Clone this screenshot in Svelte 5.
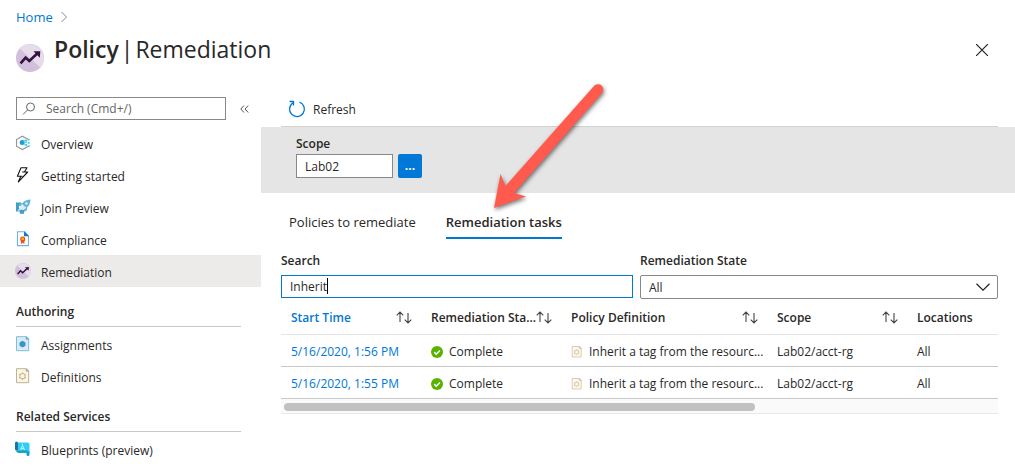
<script>
  const menu = [
    { items: [
      { icon: 'overview', label: 'Overview' },
      { icon: 'bolt', label: 'Getting started' },
      { icon: 'rocket', label: 'Join Preview' },
      { icon: 'compliance', label: 'Compliance' },
      { icon: 'trend', label: 'Remediation', active: true },
    ] },
    { title: 'Authoring', items: [
      { icon: 'assignment', label: 'Assignments' },
      { icon: 'definition', label: 'Definitions' },
    ] },
    { title: 'Related Services', items: [
      { icon: 'blueprint', label: 'Blueprints (preview)' },
    ] },
  ];
  const columns = [
    { label: 'Start Time', sort: true, sorted: true },
    { label: 'Remediation Sta...', sort: true },
    { label: 'Policy Definition', sort: true },
    { label: 'Scope', sort: true },
    { label: 'Locations' },
  ];
  const rows = [
    { time: '5/16/2020, 1:56 PM', state: 'Complete', policy: 'Inherit a tag from the resourc...', scope: 'Lab02/acct-rg', loc: 'All' },
    { time: '5/16/2020, 1:55 PM', state: 'Complete', policy: 'Inherit a tag from the resourc...', scope: 'Lab02/acct-rg', loc: 'All' },
  ];
  let query = $state('Inherit');
  let scope = $state('Lab02');
  let filter = $state('');
</script>

{#snippet icon(name, size = 16)}
  <svg class="icon" width={size} height={size} viewBox="0 0 16 16" fill="none" aria-hidden="true">
    {#if name === 'overview'}
      <path d="M13 4.2 7.3 1.2 1.5 4.5v6.8l5.8 3.3 5.7-3" stroke="#949494" stroke-width="1.1" />
      <circle cx="7.2" cy="7.6" r="2.5" fill="#1a9ed4" />
      <path d="M9 7.6h3M8.5 6l3-1.6M8.5 9.2l3 1.6" stroke="#50d5ef" />
      <path d="M10.3 5h1.8v1.8h-1.8zM12.8 3.8h1.8v1.8h-1.8zM10.3 9h1.8v1.8h-1.8zM12.8 7h1.8v1.8h-1.8zM12.8 10.3h1.8v1.8h-1.8z" fill="#3fc8ea" />
    {:else if name === 'bolt'}
      <path d="M6 .8h6L9.4 5h3.3L3.4 14.8l2.4-5.6H2.4L6 .8ZM9.4 5H7.2M5.8 9.2h1.6" stroke="#111" stroke-width="1.1" stroke-linejoin="round" />
    {:else if name === 'rocket'}
      <path d="M1 3.500h5v3H4v4h5v4.300H4.800v-2.300H1z" fill="#3a9fc9" />
      <path d="M15.500.500C12.200.700 9.500 1.800 7.600 4.100L4.500 4.600 3 7.300l3-.2 3 3-.2 3 2.900-1.500.5-3.200C14.500 6.600 15.500 3.800 15.500.500Z" fill="#62b5d8" />
      <path d="M7 5 4.800 8.200l3 3 3.700-2.400Z" fill="#e3eaed" />
      <circle cx="11.500" cy="4.500" r="1.200" fill="#e8f5fa" />
      <path d="M5 8.500 2 12.600l4.500-1.900" fill="#d3dde1" />
    {:else if name === 'compliance'}
      <path d="M2.5.8h7l4 4v9.8h-11z" fill="#fff" stroke="#72b3e2" stroke-width="1.1" />
      <path d="M9 .3 14 5.300H9z" fill="#0f79cc" />
      <path d="M6 9h3.400v4l-1.700-1.100L6 13z" fill="#ef5b18" />
      <circle cx="7.700" cy="7.900" r="2.500" fill="#e8431c" />
      <circle cx="7.700" cy="7.900" r="1.400" fill="#ffb400" />
    {:else if name === 'trend'}
      <circle cx="8" cy="8" r="8" fill="#d2bfd9" />
      <path d="M2.100 2.600A8 8 0 0 1 13.900 13.400Z" fill="#e7ddea" />
      <path d="m2.600 11.100 2.900-3.300 2.100 1.900 4.400-4.100" stroke="#341143" stroke-width="1.500" />
      <path d="m10 4.200 3.900-.1-.3 3.700z" fill="#341143" />
    {:else if name === 'assignment'}
      <path d="M1.500.7h10l2.200 2v12h-12.200z" fill="#d9edf8" stroke="#82bcd8" />
      <path d="M11 .5v2.800h3" fill="#72acd0" stroke="#72acd0" stroke-width=".6" />
      <path d="m7.500 4.800 3 1.700v3.300l-3 1.700-3-1.700V6.500z" fill="#3795c5" />
    {:else if name === 'definition'}
      <path d="M1.500.7h10l2.200 2v12h-12.200z" fill="#fff5d9" stroke="#b8b3a4" />
      <path d="M11 .5v2.800h3" fill="#b0aca0" stroke="#b0aca0" stroke-width=".6" />
      <circle cx="7.500" cy="8.200" r="2.700" stroke="#b3aea2" />
      <path d="M7.500 4.300v1m0 5.800v1M4.100 6.200l.9.500m5 2.900.9.500m-6.800 0 .9-.5m5-2.900.9-.5" stroke="#b3aea2" />
    {:else if name === 'blueprint'}
      <path d="M0 2A1.500 1.500 0 0 1 3 2v7.500H1.500A1.500 1.500 0 0 1 0 8z" fill="#17779d" />
      <path d="M3 1.500h9.500a2 2 0 0 1 2 2V12H3z" fill="#32cdf3" />
      <path d="M1 9.500h11.500v2.200H3a2.200 2.200 0 0 1-2-2.200ZM11.500 10.500h3v3a1.500 1.500 0 0 1-3 0z" fill="#159ec5" />
      <path d="m5.500 9 2-4.500 2 4.500M7.500 2.800v1.700M6 7.600h3" stroke="#c6f4ff" />
    {:else if name === 'check'}
      <circle cx="8" cy="8" r="8" fill="#57b300" />
      <path d="m4.300 8.200 2.700 2.700 4.900-5" stroke="#fff" stroke-width="2" />
    {/if}
  </svg>
{/snippet}

<div class="page">
  <header>
    <nav class="crumbs" aria-label="Breadcrumb">
      <a href="#home">Home</a>
      <svg width="6" height="12" viewBox="0 0 6 12" fill="none" aria-hidden="true"><path d="m.5 1 5 5-5 5" stroke="#858585" /></svg>
    </nav>
    <div class="heading">
      <span class="logo">{@render icon('trend', 28)}</span>
      <h1><strong>Policy</strong><span>|</span><span>Remediation</span></h1>
      <button class="close" aria-label="Close">
        <svg width="12" height="12" viewBox="0 0 12 12" aria-hidden="true"><path d="m0 0 12 12M12 0 0 12" stroke="#222" stroke-width="1.200" /></svg>
      </button>
    </div>
  </header>

  <div class="body">
    <aside>
      <div class="find">
        <label class="findbox">
          <svg width="14" height="14" viewBox="0 0 14 14" fill="none" stroke="#666" aria-hidden="true"><circle cx="8.500" cy="5" r="4" /><path d="M5.500 8 1 12.500" /></svg>
          <input type="text" placeholder="Search (Cmd+/)" aria-label="Search menu" />
        </label>
        <button class="collapse" aria-label="Collapse menu">
          <svg width="9" height="8" viewBox="0 0 9 8" fill="none" stroke="#555" aria-hidden="true"><path d="M4 .5.800 4 4 7.500M8.200.5 5 4l3.200 3.500" /></svg>
        </button>
      </div>
      <nav aria-label="Policy">
        {#each menu as group}
          {#if group.title}<h2>{group.title}</h2>{/if}
          <ul>
            {#each group.items as item}
              <li><a href="#item" class:active={item.active}>{@render icon(item.icon)}<span>{item.label}</span></a></li>
            {/each}
          </ul>
        {/each}
      </nav>
    </aside>

    <main>
      <div class="toolbar">
        <button>
          <svg width="18" height="18" viewBox="0 0 18 18" fill="none" stroke="#0078d4" stroke-width="1.300" aria-hidden="true"><path d="M11.500 2.200A7.400 7.400 0 1 1 5.200 2.800M1.500 1.500h4v4" /></svg>
          <span>Refresh</span>
        </button>
      </div>
      <section class="scope">
        <label for="scope">Scope</label>
        <div class="scope-row">
          <input id="scope" type="text" bind:value={scope} />
          <button aria-label="Select scope">...</button>
        </div>
      </section>

      <div class="content">
        <div class="tabs" role="tablist">
          <button role="tab" aria-selected="false">Policies to remediate</button>
          <button role="tab" aria-selected="true" class="selected">Remediation tasks</button>
        </div>
        <div class="filters">
          <div class="field">
            <label for="query">Search</label>
            <div class="query">
              <input id="query" type="text" bind:value={query} />
              <span class="caret"></span>
            </div>
          </div>
          <div class="field">
            <label for="state">Remediation State</label>
            <div class="select">
              <select id="state" bind:value={filter}><option value="">All</option></select>
              <svg width="14" height="8" viewBox="0 0 14 8" fill="none" stroke="#222" stroke-width="1.200" aria-hidden="true"><path d="m.5.800 6.500 6.400L13.500.800" /></svg>
            </div>
          </div>
        </div>
        <table>
          <colgroup><col class="c140" /><col class="c140" /><col class="c206" /><col class="c140" /><col /></colgroup>
          <thead>
            <tr>
              {#each columns as col}
                <th scope="col" class:sorted={col.sorted}>
                  <div class="th">
                    <span>{col.label}</span>
                    {#if col.sort}
                      <svg width="16" height="13" viewBox="0 0 16 13" fill="none" stroke="#444" stroke-width="1.100" aria-hidden="true"><path d="M4 11V1M.7 4.300 4 1l3.300 3.300M12 2v10M8.700 8.700 12 12l3.300-3.300" /></svg>
                    {/if}
                  </div>
                </th>
              {/each}
            </tr>
          </thead>
          <tbody>
            {#each rows as row}
              <tr>
                <td><a href="#task">{row.time}</a></td>
                <td><div class="cell">{@render icon('check', 12)}<span>{row.state}</span></div></td>
                <td><div class="cell pale">{@render icon('definition', 12)}<span>{row.policy}</span></div></td>
                <td>{row.scope}</td>
                <td>{row.loc}</td>
              </tr>
            {/each}
          </tbody>
        </table>
        <div class="track"><div class="thumb"></div></div>
      </div>
    </main>
  </div>

  <svg class="arrow" width="130" height="140" viewBox="0 0 130 140" aria-hidden="true">
    <path d="m14 138 6.500-34 5 12L114 16a5.200 5.200 0 0 1 8 7L34 123l12 3.500z" fill="#ff5a4d" />
  </svg>
</div>

<style>
  :global(body) { margin: 0; background: #fff; }
  .page { position: relative; overflow: hidden; font: 12px/16px "Open Sans", "Noto Sans", sans-serif; color: #292827; }
  .page * { box-sizing: border-box; }
  button, input, select { font: inherit; color: inherit; margin: 0; }
  button { border: 0; background: none; padding: 0; }
  a { color: #0078d4; text-decoration: none; }
  ul { list-style: none; margin: 0; padding: 0; }
  svg { display: block; flex: none; }
  header { padding: 9px 27px 0 16px; }
  .crumbs { display: flex; align-items: center; gap: 8px; font-size: 13px; }
  .heading { display: flex; align-items: center; height: 50px; }
  .logo { padding-top: 16px; }
  h1 { display: flex; gap: 2px; flex: 1; margin: 0 0 2px 10px; font-size: 23px; line-height: 32px; font-weight: 400; }
  h1 strong { font-weight: 600; }
  .body { display: flex; padding-top: 22px; }
  aside { width: 261px; flex: none; }
  .find { display: flex; align-items: center; gap: 14px; padding: 0 11px 7px 16px; }
  .findbox { flex: none; display: flex; align-items: center; gap: 10px; width: 210px; height: 23px; padding: 0 5px; border: 1px solid #8a8886; }
  .findbox input { flex: 1; min-width: 0; border: 0; outline: 0; padding: 0; background: none; font-weight: 400; }
  .findbox input::placeholder { color: #666; opacity: 1; }
  li a { display: flex; align-items: center; gap: 10px; height: 32px; padding: 0 15px; color: inherit; }
  li a span { padding-top: 3px; }
  li a.active { background: #edebe9; }
  h2 { margin: 9px 20px 1px 16px; padding: 8px 0 6px; border-bottom: 1px solid #c8c8c8; font-size: 12px; line-height: 16px; font-weight: 600; }
  main { flex: 1; min-width: 0; }
  .toolbar { display: flex; margin: 0 17px 0 20px; height: 30px; border-bottom: 1px solid #d2d2d2; }
  .toolbar button { display: flex; align-items: center; gap: 7px; height: 24px; padding-left: 7px; }
  .toolbar span { padding-top: 2px; }
  .scope { padding: 9px 35px 15px; background: #e5e5e5; }
  label { font-weight: 600; }
  .scope label { display: block; margin-bottom: 2px; }
  .scope-row { display: flex; gap: 5px; }
  .scope input { width: 97px; height: 24px; padding: 0 8px; border: 1px solid #8a8886; background: #fff; }
  .scope button { width: 24px; height: 24px; border-radius: 2px; background: #0078d7; color: #fff; font-weight: 700; }
  .content { padding: 0 17px 20px 20px; }
  .tabs { display: flex; gap: 30px; height: 46px; padding: 17px 8px 0; }
  .tabs button { height: 29px; padding-bottom: 3px; font-size: 13px; border-bottom: 2px solid transparent; }
  .tabs .selected { font-weight: 600; border-color: #0078d4; }
  .filters { display: grid; grid-template-columns: 352fr 358fr; gap: 7px; padding-top: 14px; }
  .field label { display: block; margin-bottom: 6px; }
  .query, .select { position: relative; }
  .query input { display: block; width: 100%; height: 23px; padding: 0 8px; border: 1px solid #0078d4; outline: 0; background: #fff; }
  .caret { position: absolute; left: 46px; top: 3px; width: 1px; height: 16px; background: #000; }
  .select select { display: block; appearance: none; width: 100%; height: 24px; padding: 2px 8px 0; border: 1px solid #8a8886; border-radius: 2px; background: #fff; }
  .select svg { position: absolute; right: 8px; top: 8px; pointer-events: none; }
  table { width: 100%; table-layout: fixed; border-collapse: separate; border-spacing: 0; }
  .c140 { width: 140px; }
  .c206 { width: 206px; }
  th, td { padding: 2px 0 0 10px; text-align: left; white-space: nowrap; }
  th { height: 36px; border-bottom: 1px solid #e5e5e5; font-weight: 600; }
  td { height: 32px; border-bottom: 1px solid #c8c8c8; }
  .sorted { color: #0078d4; }
  .th { display: flex; align-items: center; padding-right: 9px; }
  .th span { flex: 1; min-width: 0; }
  .cell { display: flex; align-items: center; gap: 6px; }
  .pale .icon { opacity: 0.8; }
  .track { height: 15px; padding: 4px 3px; background: #fafafa; border-bottom: 1px solid #e8e8e8; }
  .thumb { width: 66.25%; height: 8px; border-radius: 4px; background: #c1c1c1; }
  .arrow { position: absolute; left: 480px; top: 70px; pointer-events: none; filter: drop-shadow(1px 2px 2px #0008); }
</style>
